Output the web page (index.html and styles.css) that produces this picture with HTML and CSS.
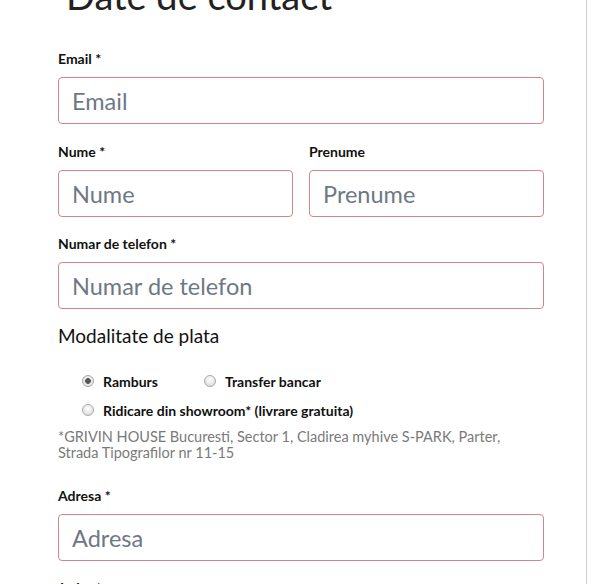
FILE: index.html
```html
<!DOCTYPE html>
<html lang="ro">
<head>
<meta charset="utf-8">
<title>Date de contact</title>
<link rel="stylesheet" href="styles.css">
</head>
<body>
<div class="page">
  <form class="form">
    <h2 class="title">Date de contact</h2>

    <div class="field field-first">
      <label class="label">Email *</label>
      <input class="input" type="text" placeholder="Email">
    </div>

    <div class="row">
      <div class="field">
        <label class="label">Nume *</label>
        <input class="input" type="text" placeholder="Nume">
      </div>
      <div class="field">
        <label class="label">Prenume</label>
        <input class="input" type="text" placeholder="Prenume">
      </div>
    </div>

    <div class="field field-last">
      <label class="label">Numar de telefon *</label>
      <input class="input" type="text" placeholder="Numar de telefon">
    </div>

    <div class="payment">
      <div class="payment-title">Modalitate de plata</div>
      <div class="radios">
        <div class="radio-row">
          <label class="radio"><input type="radio" name="pay" checked><span>Ramburs</span></label>
          <label class="radio"><input type="radio" name="pay"><span>Transfer bancar</span></label>
        </div>
        <div class="radio-row">
          <label class="radio"><input type="radio" name="pay"><span>Ridicare din showroom* (livrare gratuita)</span></label>
        </div>
      </div>
      <p class="note">*GRIVIN HOUSE Bucuresti, Sector 1, Cladirea myhive S-PARK, Parter, Strada Tipografilor nr 11-15</p>
    </div>

    <div class="field">
      <label class="label">Adresa *</label>
      <input class="input" type="text" placeholder="Adresa">
    </div>

    <div class="field">
      <label class="label">Judet *</label>
    </div>
  </form>
</div>
</body>
</html>
```

FILE: styles.css
```css
* { box-sizing: border-box; }
html, body { margin: 0; padding: 0; background: #fff; }
body { font-family: Lato, "Open Sans", sans-serif; color: #111; overflow: hidden; height: 584px; }

.page {
  width: 587px;
  min-height: 700px;
  border-right: 1px solid #cfcfcf;
}

.form {
  padding-left: 58px;
  box-sizing: content-box;
  width: 486px;
}

.title {
  margin: -28px 0 0 8px;
  font-size: 38px;
  font-weight: 400;
  line-height: 46px;
  color: #222;
  height: 78px;
}

.field { margin-bottom: 18px; }
.field-first { margin-bottom: 19px; }
.row .field { margin-bottom: 18px; }
.field-last { margin-bottom: 15px; }
.label {
  display: block;
  font-size: 14px;
  font-weight: 700;
  line-height: 18px;
  margin-bottom: 9px;
  color: #111;
}

.input {
  display: block;
  width: 100%;
  height: 47px;
  border: 1px solid #d1868b;
  border-radius: 4px;
  padding: 0 13px;
  font-family: Lato, "Open Sans", sans-serif;
  font-size: 23.5px;
  color: #333;
  background: #fff;
  outline: none;
}
.input::placeholder { color: #6e7884; }

.row {
  display: grid;
  grid-template-columns: 1fr 1fr;
  column-gap: 16px;
}

.payment { margin-bottom: 26px; }
.payment-title {
  font-size: 19px;
  line-height: 24px;
  color: #111;
  margin-bottom: 19px;
}
.radios { padding-left: 24px; }
.radio-row {
  display: flex;
  gap: 46px;
  height: 29px;
  align-items: center;
}
.radio {
  display: flex;
  align-items: center;
  gap: 9px;
  font-size: 14px;
  font-weight: 700;
  color: #111;
}
.radio input {
  -webkit-appearance: none;
  appearance: none;
  margin: 0;
  width: 12px;
  height: 12px;
  border-radius: 50%;
  border: 1px solid #a9a9a9;
  background: radial-gradient(circle at 50% 35%, #ffffff 0%, #e6e6e6 60%, #d2d2d2 100%);
  position: relative;
  top: -1px;
}
.radio input:checked {
  background: radial-gradient(circle, #555 0 2.5px, #ededed 3.2px, #dcdcdc 100%);
}

.note {
  margin: 4px 0 0;
  max-width: 470px;
  font-size: 14.5px;
  line-height: 16px;
  color: #7a7a7a;
}
```
